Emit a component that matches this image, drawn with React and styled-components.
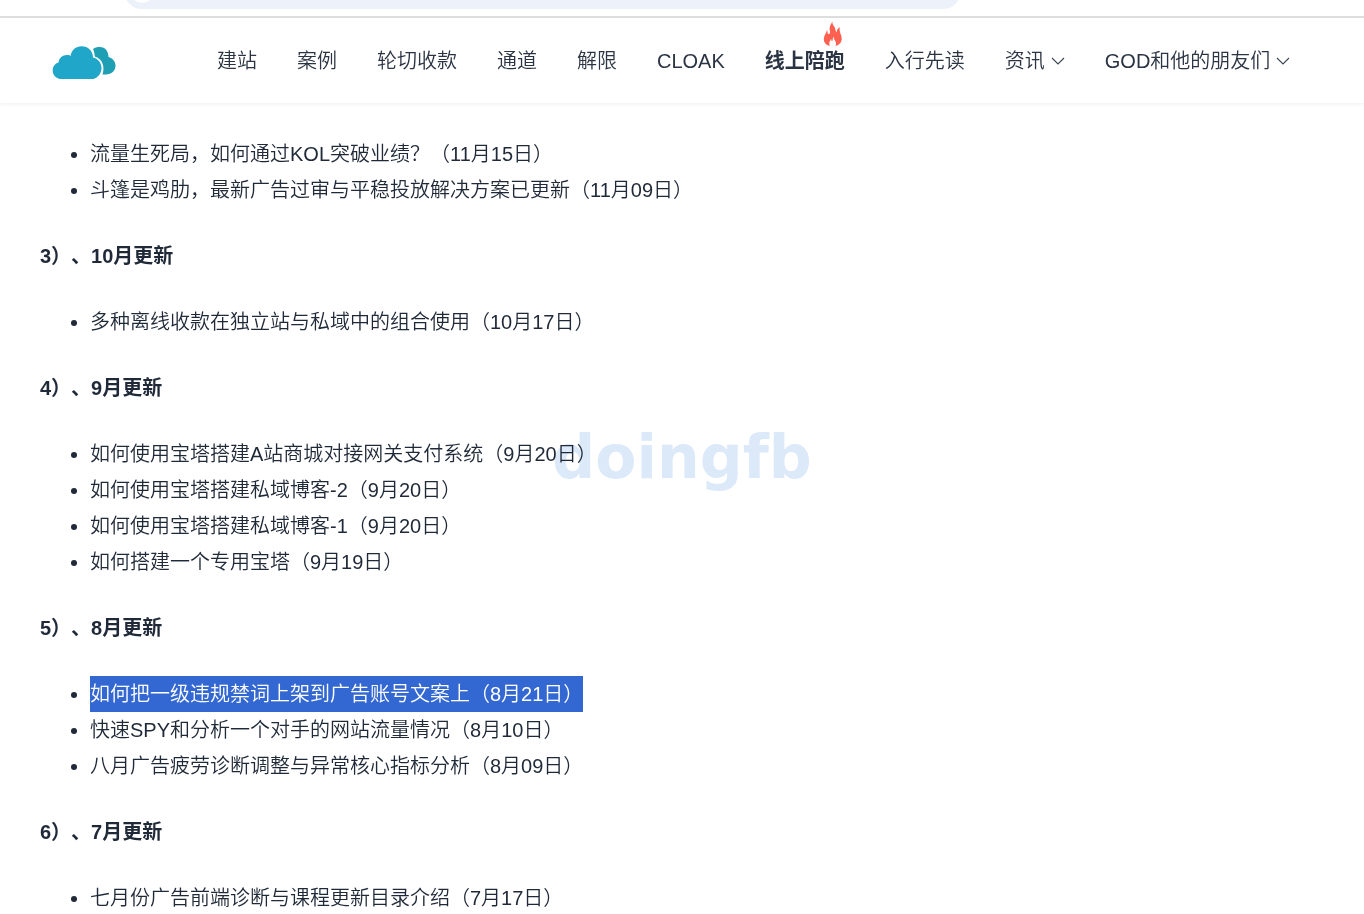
import React from "react";
import styled, { createGlobalStyle } from "styled-components";

const navItems = [
  { label: "建站" },
  { label: "案例" },
  { label: "轮切收款" },
  { label: "通道" },
  { label: "解限" },
  { label: "CLOAK" },
  { label: "线上陪跑", hot: true },
  { label: "入行先读" },
  { label: "资讯", menu: true },
  { label: "GOD和他的朋友们", menu: true },
];

const sections = [
  {
    items: [
      { text: "流量生死局，如何通过KOL突破业绩？（11月15日）" },
      { text: "斗篷是鸡肋，最新广告过审与平稳投放解决方案已更新（11月09日）" },
    ],
  },
  {
    title: "3）、10月更新",
    items: [{ text: "多种离线收款在独立站与私域中的组合使用（10月17日）" }],
  },
  {
    title: "4）、9月更新",
    items: [
      { text: "如何使用宝塔搭建A站商城对接网关支付系统（9月20日）" },
      { text: "如何使用宝塔搭建私域博客-2（9月20日）" },
      { text: "如何使用宝塔搭建私域博客-1（9月20日）" },
      { text: "如何搭建一个专用宝塔（9月19日）" },
    ],
  },
  {
    title: "5）、8月更新",
    items: [
      { text: "如何把一级违规禁词上架到广告账号文案上（8月21日）", selected: true },
      { text: "快速SPY和分析一个对手的网站流量情况（8月10日）" },
      { text: "八月广告疲劳诊断调整与异常核心指标分析（8月09日）" },
    ],
  },
  {
    title: "6）、7月更新",
    items: [{ text: "七月份广告前端诊断与课程更新目录介绍（7月17日）" }],
  },
];

export default function App() {
  return (
    <>
      <GlobalStyle />
      {/* Browser edge */}
      <BrowserEdge>
        <AddressBar>
          <SiteInfo />
        </AddressBar>
      </BrowserEdge>
      {/* Header */}
      <Header>
        <LogoLink href="#" aria-label="Home">
          <CloudLogo />
        </LogoLink>
        <Nav>
          {navItems.map((item) => (
            <NavLink href="#" key={item.label} $bold={item.hot}>
              {item.label}
              {item.menu && <Chevron />}
              {item.hot && (
                <HotBadge>
                  <Flame />
                </HotBadge>
              )}
            </NavLink>
          ))}
        </Nav>
      </Header>
      <Watermark aria-hidden="true">doingfb</Watermark>
      {/* Article */}
      <Article>
        {sections.map((section, i) => (
          <React.Fragment key={i}>
            {section.title && <Title>{section.title}</Title>}
            <List>
              {section.items.map((item) => (
                <Item key={item.text}>
                  {item.selected ? <Selected>{item.text}</Selected> : item.text}
                </Item>
              ))}
            </List>
          </React.Fragment>
        ))}
      </Article>
    </>
  );
}

function CloudLogo() {
  return (
    <svg width="64" height="34" viewBox="0 0 64 34">
      <path
        fill="#1f9fb4"
        d="M41 3C44 1 46 1 48 1C53 1 56.500 5 56.500 11C60.500 12 63.500 15.500 63.500 19.500C63.500 25 59.500 28.500 54 28.500H50.500C51.500 25.500 52 21 50.500 17.500C49 13.500 46 11.500 42.800 10.500C42.500 7.500 42 5 41 3Z"
      />
      <path
        fill="#1fa6c8"
        d="M8 33C3.500 32 .7 28.500 .7 24.500C.7 20.500 3 17.500 6.500 16.500C7 11.500 11 8.500 16 9C17 9 18 9.500 18.500 10C19.500 4 24 .3 29.500 .3C36 .3 41 5 41 11.500C46 12.500 49.500 17 49.500 22C49.500 27.500 46 31.500 41.500 33Z"
      />
    </svg>
  );
}

function Chevron() {
  return (
    <svg width="14" height="10" viewBox="0 0 14 10" fill="none">
      <path d="M1 2L7 8L13 2" stroke="#3a4452" strokeWidth="1.1" />
    </svg>
  );
}

function Flame() {
  return (
    <svg width="20" height="26" viewBox="0 0 20 26">
      <path
        fill="#ff6050"
        d="M9.500 .3C8.500 2.500 6.500 5 6.600 7.800C6.700 9.500 7.300 10.800 7 12C6.700 13.200 5.500 13.500 4.900 12.500C4.300 11.500 4.600 10 4 9C3.500 12 .8 14.500 .8 18C.8 21.500 3 24 6.800 25C5.500 21.500 7.200 19.500 8.300 18C8.300 19.200 8.500 20 9.100 20.300C10 19.500 9.400 17.500 10.800 15.500C10.700 17.500 11.300 18.500 12 19.500C13.300 21.500 13.300 23.500 12.500 25C16.500 24 18.800 21 18.700 17.500C18.600 13.500 15.500 10 17 6.300C14.700 7 13.800 9.200 13.700 11.300C12.500 10.500 12.500 8.800 12 7C11.300 4.800 8.700 3.300 9.500 .3Z"
      />
    </svg>
  );
}

const GlobalStyle = createGlobalStyle`
  * {
    box-sizing: border-box;
  }
  body {
    margin: 0;
    background: #fff;
    color: #1f2937;
    font-family: "Liberation Sans", "Noto Sans CJK SC", sans-serif;
    font-size: 20px;
    font-weight: 350;
    line-height: 36px;
    text-spacing-trim: space-all;
  }
`;

const BrowserEdge = styled.div`
  display: flex;
  align-items: flex-end;
  height: 18px;
  padding: 0 403px 7px 124px;
  border-bottom: 2px solid #e0e0e0;
  overflow: hidden;
`;
const AddressBar = styled.div`
  display: flex;
  flex: 1;
  align-items: center;
  height: 36px;
  padding-left: 6px;
  border-radius: 18px;
  background: #ecf1fa;
`;
const SiteInfo = styled.span`
  width: 24px;
  height: 24px;
  border-radius: 50%;
  background: #fff;
`;

const Header = styled.header`
  display: flex;
  align-items: center;
  height: 85px;
  padding-left: 52px;
  box-shadow: 0 1px 4px rgba(0, 0, 0, 0.07);
`;
const LogoLink = styled.a`
  display: flex;
  margin-right: 101px;
  padding-top: 4px;
`;
const Nav = styled.nav`
  display: flex;
  gap: 40px;
`;
const NavLink = styled.a`
  position: relative;
  display: flex;
  align-items: center;
  gap: 6px;
  color: #2b3443;
  font-weight: ${(props) => (props.$bold ? 700 : 350)};
  text-decoration: none;
  white-space: nowrap;
`;
const HotBadge = styled.span`
  position: absolute;
  top: -22px;
  right: 2px;
  display: flex;
`;

const Watermark = styled.div`
  position: fixed;
  inset: 0;
  z-index: -1;
  display: flex;
  align-items: center;
  justify-content: center;
  color: #dce9f9;
  font-family: "DejaVu Sans", sans-serif;
  font-size: 60px;
  font-weight: 700;
`;

const Article = styled.main`
  padding: 33px 40px 0;
`;
const Title = styled.h3`
  margin: 30px 0;
  font-size: 20px;
  font-weight: 700;
`;
const List = styled.ul`
  margin: 0;
  padding-left: 50px;
`;
const Item = styled.li`
  padding: 0;
`;
const Selected = styled.mark`
  display: inline-block;
  vertical-align: top;
  background: #3367d1;
  color: #fff;
`;
